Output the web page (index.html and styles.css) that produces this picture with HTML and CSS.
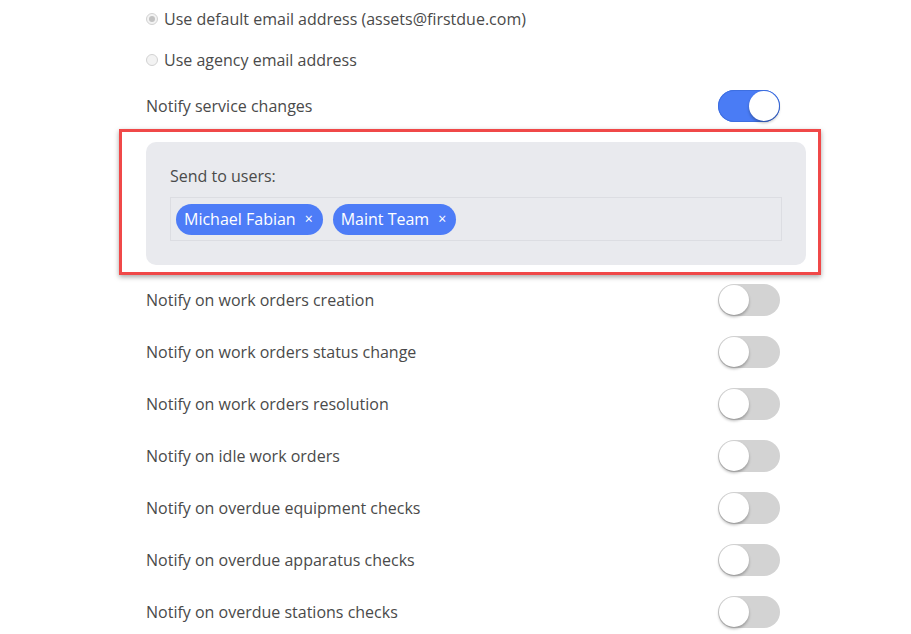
FILE: index.html
```html
<!DOCTYPE html>
<html>
<head>
<meta charset="utf-8">
<link rel="stylesheet" href="styles.css">
</head>
<body>
<div class="wrap">
  <div class="radio-row first"><span class="radio checked"></span><span>Use default email address (assets@firstdue.com)</span></div>
  <div class="radio-row second"><span class="radio"></span><span>Use agency email address</span></div>
  <div class="row service"><span>Notify service changes</span><span class="toggle on"><span class="knob"></span></span></div>
  <div class="highlight">
    <div class="panel">
      <div class="panel-label">Send to users:</div>
      <div class="tags">
        <span class="chip">Michael Fabian<span class="x">×</span></span>
        <span class="chip">Maint Team<span class="x">×</span></span>
      </div>
    </div>
  </div>
  <div class="row"><span>Notify on work orders creation</span><span class="toggle"><span class="knob"></span></span></div>
  <div class="row"><span>Notify on work orders status change</span><span class="toggle"><span class="knob"></span></span></div>
  <div class="row"><span>Notify on work orders resolution</span><span class="toggle"><span class="knob"></span></span></div>
  <div class="row"><span>Notify on idle work orders</span><span class="toggle"><span class="knob"></span></span></div>
  <div class="row"><span>Notify on overdue equipment checks</span><span class="toggle"><span class="knob"></span></span></div>
  <div class="row"><span>Notify on overdue apparatus checks</span><span class="toggle"><span class="knob"></span></span></div>
  <div class="row"><span>Notify on overdue stations checks</span><span class="toggle"><span class="knob"></span></span></div>
</div>
</body>
</html>
```
FILE: styles.css
```css
html, body {
  margin: 0;
  padding: 0;
  background: #ffffff;
  overflow: hidden;
}
body {
  font-family: "Open Sans", "Liberation Sans", sans-serif;
  font-size: 16px;
  color: #4a4a4a;
}
.wrap {
  width: 634px;
  margin-left: 146px;
  display: flex;
  flex-direction: column;
}
.radio-row {
  display: flex;
  align-items: center;
  gap: 6px;
  line-height: 22px;
}
.radio-row.first { height: 38px; }
.radio-row.second { height: 44px; }
.radio {
  width: 10px;
  height: 10px;
  border-radius: 50%;
  border: 1px solid #d2d2d2;
  background: #f3f3f3;
  display: flex;
  align-items: center;
  justify-content: center;
  flex: none;
}
.radio.checked::after {
  content: "";
  width: 6px;
  height: 6px;
  border-radius: 50%;
  background: #c2c2c2;
}
.row {
  display: flex;
  align-items: center;
  justify-content: space-between;
  height: 52px;
  line-height: 22px;
}
.row.service { height: 48px; }
.toggle {
  width: 62px;
  height: 32px;
  border-radius: 16px;
  background: #d3d3d3;
  display: flex;
  align-items: center;
  padding: 0 1px;
  box-sizing: border-box;
  flex: none;
}
.toggle .knob {
  width: 30px;
  height: 30px;
  border-radius: 50%;
  background: #ffffff;
  box-shadow: 0 2px 3px rgba(0,0,0,0.28);
}
.toggle.on {
  background: #4a7cf5;
  justify-content: flex-end;
  box-shadow: inset 0 0 0 1px #3e6fe0;
}
.highlight {
  margin: -1px -41px -1px -27px;
  border: 3px solid #f04848;
  padding: 10px 12px 7px 24px;
  box-shadow: 0 2px 5px rgba(0,0,0,0.35);
}
.panel {
  background: #e9eaee;
  border-radius: 10px;
  padding: 23px 24px 24px 24px;
}
.panel-label {
  line-height: 22px;
  margin-bottom: 10px;
}
.tags {
  height: 44px;
  box-sizing: border-box;
  border: 1px solid #dcdde2;
  display: flex;
  align-items: center;
  gap: 10px;
  padding: 0 5px;
}
.chip {
  display: inline-flex;
  align-items: center;
  height: 31px;
  border-radius: 16px;
  background: #4d7cf7;
  color: #ffffff;
  padding: 0 10px 0 8px;
  line-height: 22px;
}
.chip .x {
  font-size: 14px;
  margin-left: 9px;
}
```
